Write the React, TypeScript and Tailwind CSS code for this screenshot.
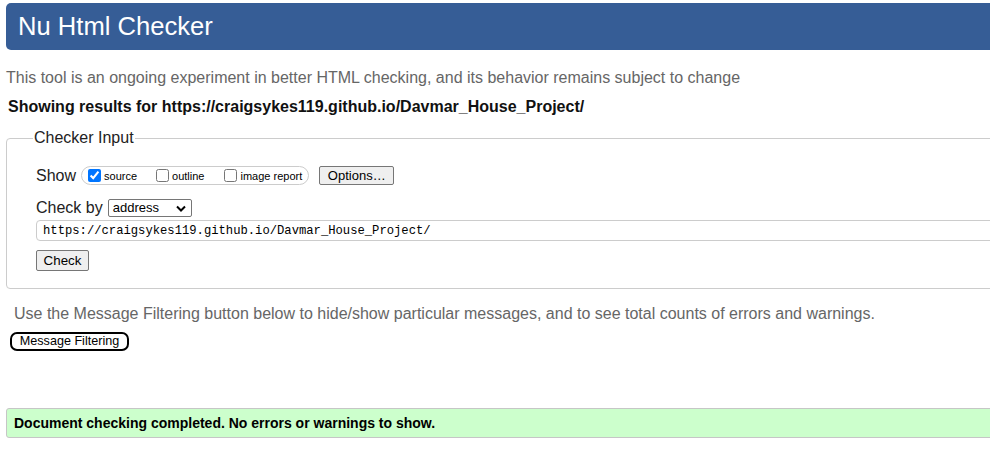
const Chevron = () => (
  <svg width="10" height="7" viewBox="0 0 10 7" className="ml-auto mr-[5px]">
    <polyline points="1,1.5 5,5.5 9,1.5" fill="none" stroke="#000" strokeWidth="2" />
  </svg>
)

const Option = ({ label, checked = false, gap }: { label: string; checked?: boolean; gap: string }) => (
  <label className={`flex items-center ${gap}`}>
    <input type="checkbox" defaultChecked={checked} className="m-0 w-[13px] h-[13px]" />
    <span className="ml-[3px] text-[11px] leading-[13px] mt-[2px] text-black">{label}</span>
  </label>
)

const App = () => {
  return (
    <div className="w-[990px] h-[449px] overflow-hidden bg-white font-['Liberation_Sans',Arial,sans-serif]">
      <div className="w-[1040px] pt-[3px]">
        <header className="ml-[6px] h-[47px] rounded-[5px] bg-[#365d96] flex items-center pl-[12px]">
          <h1 className="text-white text-[25.6px] leading-none">Nu Html Checker</h1>
        </header>

        <p className="mt-[19px] ml-[6px] text-[16px] leading-[18px] text-[#666]">
          This tool is an ongoing experiment in better HTML checking, and its behavior remains subject to change
        </p>
        <p className="mt-[11px] ml-[8px] text-[16px] leading-[18px] font-bold text-[#111]">
          Showing results for https://craigsykes119.github.io/Davmar_House_Project/
        </p>

        <fieldset className="mt-[13px] ml-[6px] border border-[#ccc] rounded-[4px] p-0">
          <legend className="ml-[26px] px-[1px] text-[16px] leading-[18px] text-[#222]">Checker Input</legend>
          <div className="pl-[29px] pt-[19px] pb-[17px]">
            <div className="flex items-center h-[19px]">
              <span className="text-[16px] leading-[18px] text-[#222]">Show</span>
              <div className="ml-[5px] h-[19px] flex items-center border border-[#ccc] rounded-full pl-[6px] pr-[6px]">
                <Option label="source" checked gap="mr-[19px]" />
                <Option label="outline" gap="mr-[20px]" />
                <Option label="image report" gap="" />
              </div>
              <button className="ml-[10px] w-[75px] h-[19px] bg-[#efefef] border border-[#767676] rounded-[2px] text-[13px] leading-none text-black">
                Options…
              </button>
            </div>

            <div className="mt-[14px] flex items-center h-[18px]">
              <span className="text-[16px] leading-[18px] text-[#222]">Check by</span>
              <div className="ml-[5px] w-[84px] h-[18px] flex items-center border border-[#767676] rounded-[2px] pl-[4px] text-[13px] text-black">
                address
                <Chevron />
              </div>
            </div>

            <div className="mt-[3px] h-[21px] flex items-center border border-[#ccc] rounded-[4px] pl-[6px] pt-[1px] font-['Liberation_Mono',monospace] text-[12.2px] text-black">
              https://craigsykes119.github.io/Davmar_House_Project/
            </div>

            <button className="block mt-[9px] w-[53px] h-[21px] bg-[#efefef] border border-[#767676] rounded-[2px] text-[13.33px] leading-none text-black">
              Check
            </button>
          </div>
        </fieldset>

        <p className="mt-[16px] ml-[14px] text-[16px] leading-[18px] text-[#666]">
          Use the Message Filtering button below to hide/show particular messages, and to see total counts of errors and warnings.
        </p>
        <button className="block mt-[9px] ml-[10px] w-[119px] h-[19px] border-2 border-black rounded-[7px] bg-white text-[12.6px] leading-none text-black">
          Message Filtering
        </button>

        <div className="mt-[57px] ml-[6px] h-[30px] flex items-center bg-[#ccffcc] border border-[#c6c6c6] rounded-[3px] pl-[7px]">
          <span className="text-[14px] font-bold text-black">Document checking completed. No errors or warnings to show.</span>
        </div>
      </div>
    </div>
  )
}

export default App
